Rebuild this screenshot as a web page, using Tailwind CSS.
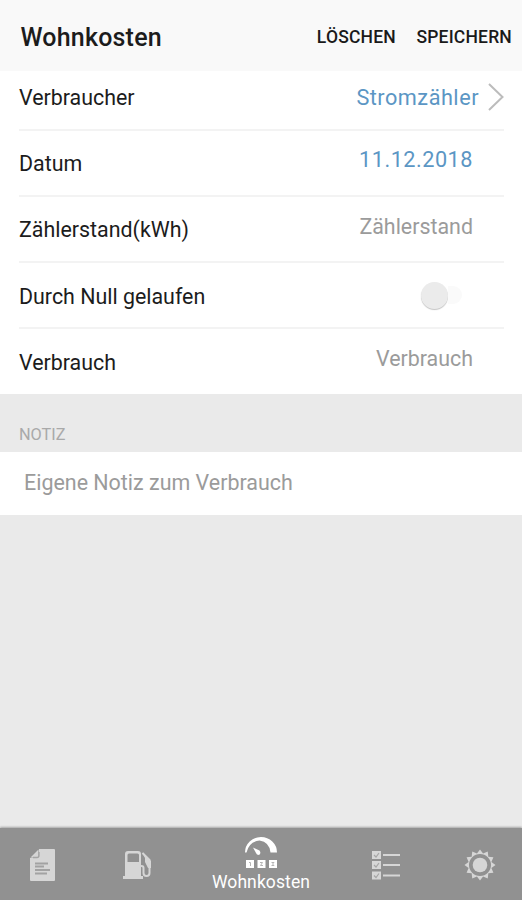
<!DOCTYPE html>
<html lang="de">
<head>
    <meta charset="UTF-8">
    <meta name="viewport" content="width=device-width, initial-scale=1.0">
    <script src="https://cdn.jsdelivr.net/npm/@tailwindcss/browser@4"></script>
    <title>Wohnkosten</title>
</head>
<body class="bg-[#eaeaea] font-[Roboto,sans-serif] text-[#1c1c1c]">

<div class="flex flex-col h-[900px] w-[522px] overflow-hidden">

    <header class="flex items-center justify-between h-[71px] bg-[#f9f9f9] pl-[20.5px] pr-[10px] pt-[3px]">
        <h1 class="pt-[2px] text-[25px] font-medium tracking-[0.2px]">Wohnkosten</h1>
        <div class="flex gap-[20.5px] text-[17.5px] font-medium text-[#1a1a1a] tracking-[0.2px]">
            <button>LÖSCHEN</button>
            <button>SPEICHERN</button>
        </div>
    </header>

    <main class="bg-white pl-[19px] pr-[18px] text-[21.4px] h-[323px]">
        <div class="flex items-center justify-between h-[60px] border-b-2 border-[#f3f3f3] pb-[5px]">
            <span class="pt-px">Verbraucher</span>
            <span class="flex items-center text-[#5b96c4] text-[21.7px] tracking-[0.5px]">
                <span class="pt-px">Stromzähler</span>
                <svg class="ml-[9px]" width="16" height="28" viewBox="0 0 16 28" fill="none" stroke="#bcbcbc" stroke-width="2"><path d="M1 1L14.5 14L1 27"/></svg>
            </span>
        </div>
        <div class="flex items-center justify-between h-[66px] border-b-2 border-[#f3f3f3] pr-[31px]">
            <span class="pt-[2px]">Datum</span>
            <span class="pb-[5px] text-[#5b96c4] text-[21.7px] tracking-[0.5px]">11.12.2018</span>
        </div>
        <div class="flex items-center justify-between h-[66px] border-b-2 border-[#f3f3f3] pr-[31px]">
            <span class="pt-[2px]">Zählerstand(kWh)</span>
            <span class="pb-[3px] text-[#9b9b9b]">Zählerstand</span>
        </div>
        <div class="flex items-center justify-between h-[66px] border-b-2 border-[#f3f3f3] pr-[42px]">
            <span class="pt-[4px]">Durch Null gelaufen</span>
            <span class="flex items-center w-[41px]">
                <span class="size-[27px] rounded-full bg-[#ebebeb] shadow-[0_1px_1px_#c4c4c4]"></span>
                <span class="w-[14px] h-[18px] rounded-r-full bg-[#fafafa]"></span>
            </span>
        </div>
        <div class="flex items-center justify-between h-[65px] pr-[31px]">
            <span class="pt-[3px]">Verbrauch</span>
            <span class="pb-[4px] text-[#9b9b9b]">Verbrauch</span>
        </div>
    </main>

    <h2 class="h-[58px] pl-[19px] pt-[29px] text-[16.3px] leading-[24px] text-[#a9a9a9]">NOTIZ</h2>
    <div class="flex items-center h-[63px] bg-white pl-[24px] pb-px text-[21.45px] text-[#9b9b9b]">Eigene Notiz zum Verbrauch</div>

    <nav class="mt-auto flex items-center h-[72px] bg-[#919191] shadow-[0_-1px_2px_#a5a5a5] text-[#d6d6d6]">
        <!-- document -->
        <div class="flex w-[84px] justify-center pt-[2px] pl-px">
            <svg width="26" height="32" viewBox="0 0 26 32" fill="currentColor">
                <path d="M9 0H24Q25 0 25 1V31Q25 32 24 32H1Q0 32 0 31V9L9 8Z"/>
                <path d="M0.500 8.500L8.500 0.500V6.500Q8.500 8.500 6.500 8.500Z"/>
                <path d="M3 8.500H7Q9 8.500 9 6.500V3" fill="none" stroke="#a5a5a5" stroke-width="1.300"/>
                <path d="M5 14.500H18M5 17.500H14M5 21H20M5 24.500H17" stroke="#a2a2a2" stroke-width="1.800"/>
            </svg>
        </div>
        <!-- fuel pump -->
        <div class="flex w-[106px] justify-center pt-[2px] pl-px">
            <svg width="30" height="30" viewBox="0 0 30 30">
                <path fill="currentColor" fill-rule="evenodd" d="M5 1H15Q18 1 18 4V26H20V29H0V26H2V4Q2 1 5 1ZM6 3.500Q4.500 3.500 4.500 5V12H16V5Q16 3.500 14.500 3.500Z"/>
                <path fill="none" stroke="currentColor" stroke-width="2" d="M18 16H18.500Q20.500 16 20.500 18V23Q20.500 26 23.500 26Q26.500 26 26.500 23V10L19.500 3"/>
                <path fill="currentColor" d="M19 2.500L28 11V18H25L22 12V8Z"/>
            </svg>
        </div>
        <!-- active tab -->
        <div class="flex flex-col items-center w-[142px] pt-[3px] text-white">
            <svg class="overflow-visible" width="32" height="32" viewBox="0 0 32 32" fill="#fff">
                <path d="M0 14.500A16 15.500 0 0 1 32 14.500H25.500Q24.500 4 14.500 2.500Q4 3.500 1.500 14.500Z"/>
                <path d="M8 9.500L14.500 12.500Q16.500 15.500 14 17Q11.500 17 11 15Z"/>
                <path d="M1 22H9V30H1ZM12.500 22H20.500V30H12.500ZM24 22H32V30H24Z"/>
                <path d="M4 24.500H5.500V28M15 24.500H17.500L15.500 27.500H18M26.500 24.500H29L27.500 26L29 27.500H26.500" fill="none" stroke="#b5b5b5"/>
            </svg>
            <span class="text-[17.5px] leading-[24px] tracking-[0.1px]">Wohnkosten</span>
        </div>
        <!-- checklist -->
        <div class="flex w-[106px] justify-center pt-[2px] pl-[2px]">
            <svg width="28" height="30" viewBox="0 0 28 30">
                <path fill="currentColor" d="M0 1H9V9H0ZM0 11H9V19H0ZM0 21.500H9V29.500H0Z"/>
                <path fill="none" stroke="#a5a5a5" stroke-width="1.200" d="M2 5L4 7L7 3M2 15L4 17L7 13M2 25.500L4 27.500L7 23.500"/>
                <path stroke="currentColor" stroke-width="2" d="M11 5H28M11 15H28M11 25.500H28"/>
            </svg>
        </div>
        <!-- settings -->
        <div class="flex w-[84px] justify-center pt-[2px]">
            <svg width="32" height="32" viewBox="0 0 32 32">
                <circle cx="16" cy="16" r="7.300" fill="currentColor"/>
                <path fill="currentColor" fill-rule="evenodd" d="M31.500 16L27.400 19.050L29.420 23.750L24.340 24.340L23.750 29.420L19.050 27.400L16 31.500L12.950 27.400L8.250 29.420L7.660 24.340L2.580 23.750L4.600 19.050L0.500 16L4.600 12.950L2.580 8.250L7.660 7.660L8.250 2.580L12.950 4.600L16 0.500L19.050 4.600L23.750 2.580L24.340 7.660L29.420 8.250L27.400 12.950ZM16 5A11 11 0 1 0 16 27A11 11 0 1 0 16 5Z"/>
            </svg>
        </div>
    </nav>
</div>

</body>
</html>
